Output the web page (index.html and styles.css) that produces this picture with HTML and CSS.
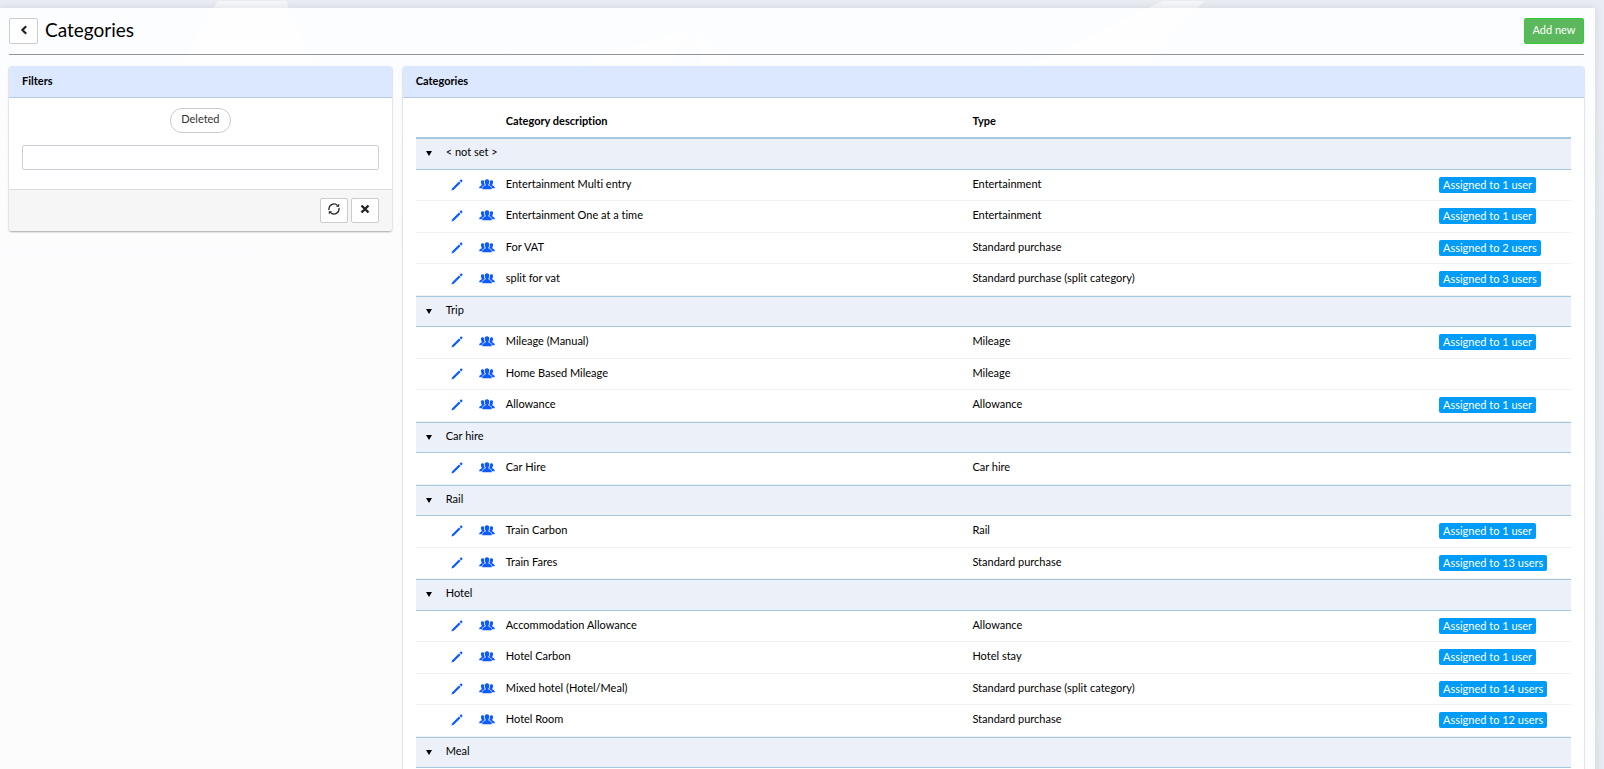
FILE: index.html
```html
<!DOCTYPE html>
<html lang="en">
<head>
    <meta charset="UTF-8">
    <meta name="viewport" content="width=device-width, initial-scale=1.0">
    <title>Categories</title>
    <link rel="stylesheet" href="styles.css">
</head>
<body>
    <svg class="backdrop" width="1604" height="200" aria-hidden="true">
        <polygon points="218,1 286,1 313,64 180,64" />
        <polygon points="1163,1 1204,1 1144,66 1028,66" />
        <polygon points="600,54 690,30 668,66 580,66" />
        <polygon points="693,30 735,66 702,66" />
    </svg>

    <!-- icons shared by the rows -->
    <svg class="sprite" width="0" height="0" aria-hidden="true">
        <symbol id="pencil" viewBox="0 0 12 12">
            <path d="M0.4 11.6 L1.2 9.2 L8 2.4 L9.6 4 L2.8 10.8 Z M8.6 1.8 L9.8 0.6 Q10.2 0.2 10.6 0.6 L11.4 1.4 Q11.8 1.8 11.4 2.2 L10.2 3.4 Z" />
        </symbol>
        <symbol id="users" viewBox="0 0 16 11">
            <path d="M8 0.3 C9.6 0.3 10.4 1.4 10.3 2.9 C10.2 4 9.9 4.7 9.4 5.3 L9.4 6.3 C9.8 7 12.2 7.4 12.6 8.4 L12.8 10.3 L3.2 10.3 L3.4 8.4 C3.8 7.4 6.2 7 6.6 6.3 L6.6 5.3 C6.1 4.7 5.8 4 5.7 2.9 C5.6 1.4 6.4 0.3 8 0.3 Z" />
            <path d="M3.7 1.3 C4.4 1.3 4.9 1.5 5 2 C4.8 3.4 5.1 4.7 5.7 5.6 L5.7 6.3 C4.4 6.9 3.2 7.3 2.8 9.3 L0.2 9.3 C0.2 7.6 0.8 7.1 2.5 6.6 L2.7 5.4 C2.1 4.7 1.9 3.9 1.9 3.1 C1.9 1.9 2.5 1.3 3.7 1.3 Z" />
            <path d="M12.3 1.3 C11.6 1.3 11.1 1.5 11 2 C11.2 3.4 10.9 4.7 10.3 5.6 L10.3 6.3 C11.6 6.9 12.8 7.3 13.2 9.3 L15.8 9.3 C15.8 7.6 15.2 7.1 13.5 6.6 L13.3 5.4 C13.9 4.7 14.1 3.9 14.1 3.1 C14.1 1.9 13.5 1.3 12.3 1.3 Z" />
        </symbol>
        <symbol id="caret" viewBox="0 0 6 5">
            <path d="M0 0 H6 L3 5 Z" />
        </symbol>
    </svg>

    <div class="page">
        <header class="page-header">
            <button class="btn btn-back" type="button" aria-label="Back">
                <svg width="8" height="10" viewBox="0 0 8 10"><path d="M6.2 1.2 L2.4 5 L6.2 8.8" fill="none" stroke="#222" stroke-width="2.2" /></svg>
            </button>
            <h1>Categories</h1>
            <button class="btn btn-add" type="button">Add new</button>
        </header>

        <div class="columns">
            <section class="panel">
                <h2>Filters</h2>
                <div class="filter-body">
                    <button class="pill" type="button">Deleted</button>
                    <input type="text" class="search" aria-label="Filter text">
                </div>
                <div class="filter-footer">
                    <button class="btn" type="button" aria-label="Refresh">
                        <svg width="12" height="12" viewBox="0 0 12 12"><path d="M1.1 7.2 A5 5 0 0 1 9.6 2.6 M10.9 4.8 A5 5 0 0 1 2.4 9.4" fill="none" stroke="#222" stroke-width="1.3" /><path d="M8 3.7 H11.2 V0.7 Z M4 8.3 H0.8 V11.3 Z" fill="#222" /></svg>
                    </button>
                    <button class="btn" type="button" aria-label="Clear">
                        <svg width="10" height="12" viewBox="0 0 10 12"><path d="M1.5 2.5 L8.5 9.5 M8.5 2.5 L1.5 9.5" fill="none" stroke="#222" stroke-width="2.4" /></svg>
                    </button>
                </div>
            </section>

            <section class="panel">
                <h2>Categories</h2>
                <div class="table-body">
                    <table>
                        <colgroup>
                            <col class="col-toggle">
                            <col class="col-icon">
                            <col class="col-icon">
                            <col>
                            <col>
                            <col class="col-assigned">
                        </colgroup>
                        <thead>
                            <tr>
                                <th colspan="3"></th>
                                <th>Category description</th>
                                <th>Type</th>
                                <th></th>
                            </tr>
                        </thead>
                        <tbody id="rows"></tbody>
                    </table>
                </div>
            </section>
        </div>
    </div>

    <script src="script.js"></script>
</body>
</html>
```
FILE: styles.css
```css
* {
    box-sizing: border-box;
}

body {
    font-family: Lato, sans-serif;
    font-size: 11px;
    font-variant-ligatures: none;
    line-height: 1.5;
    color: #000;
    margin: 0;
    height: 100vh;
    overflow: hidden;
    background: linear-gradient(#e9edf3, #e6eaf1);
}

button,
input {
    font: inherit;
}

.backdrop {
    position: absolute;
    top: 0;
    left: 0;
    z-index: -1;
    fill: #f5f7fa;
}

.sprite {
    position: absolute;
}

.page {
    margin: 8px 9px 0 0;
    padding: 10px 11px 10px 9px;
    min-height: 100vh;
    background-color: rgba(255, 255, 255, 0.85);
    box-shadow: 0 0 8px rgba(0, 0, 0, 0.1);
}

.page-header {
    display: flex;
    align-items: flex-start;
    padding-bottom: 10px;
    border-bottom: 1px solid #949494;
}

h1 {
    margin: 0 auto 0 7px;
    font-size: 19px;
    font-weight: 400;
    line-height: 23px;
}

.btn {
    display: flex;
    justify-content: center;
    width: 28px;
    height: 25px;
    padding: 4px 0;
    background-color: #fff;
    border: 1px solid #ccc;
    border-radius: 2px;
    cursor: pointer;
}

.btn-back {
    width: 29px;
    height: 26px;
    padding: 6px 0;
}

.btn-add {
    width: 60px;
    height: 26px;
    padding: 3px 0;
    background-color: #5cb85c;
    border-color: #32cd32;
    color: #fff;
}

.columns {
    display: grid;
    grid-template-columns: calc(25% - 11px) 1fr;
    gap: 11px;
    align-items: start;
    margin-top: 11px;
}

.panel {
    background-color: #fff;
    border-radius: 3px;
    box-shadow: 0 1px 2px rgba(0, 0, 0, 0.35);
    overflow: hidden;
}

.panel h2 {
    margin: 0;
    padding: 7px 13px;
    font-size: 11px;
    font-weight: 700;
    background-color: #dbe8ff;
    border-bottom: 1px solid #b5cbe4;
}

.filter-body {
    display: flex;
    flex-direction: column;
    align-items: center;
    gap: 12px;
    padding: 10px 13px 19px;
}

.pill {
    height: 25px;
    padding: 2px 10px 5px;
    background-color: #fff;
    border: 1px solid #ccc;
    border-radius: 12px;
    color: #333;
    cursor: pointer;
}

.search {
    width: 100%;
    height: 25px;
    padding: 2px 8px;
    border: 1px solid #ccd0d6;
    border-radius: 2px;
}

.filter-footer {
    display: flex;
    justify-content: flex-end;
    gap: 3px;
    padding: 8px 13px;
    background-color: #f6f6f6;
    border-top: 1px solid #ddd;
}

.table-body {
    padding: 10px 13px;
}

table {
    width: 100%;
    table-layout: fixed;
    border-spacing: 0;
}

.col-toggle {
    width: 25px;
}

.col-icon {
    width: 30px;
}

.col-assigned {
    width: 137px;
}

th {
    padding: 5px 5px 8px;
    text-align: left;
    border-bottom: 1px solid #a5c8dc;
}

td {
    padding: 6px 5px 8px;
    vertical-align: top;
    border-bottom: 1px solid #f1f1f1;
}

.group td {
    padding: 5px 5px 8px;
    background-color: #ebf0f9;
    border-top: 1px solid #a5c8dc;
    border-bottom: 1px solid #a5c8dc;
}

td.icon-cell {
    padding: 9px 0 0 2px;
    text-align: center;
}

.group td.icon-cell {
    padding-top: 12px;
}

td.badge-cell {
    padding: 7px 5px 0;
}

.icon-btn {
    display: block;
    width: 100%;
    padding: 0;
    background: none;
    border: none;
    color: #0d5bff;
    cursor: pointer;
}

.icon-btn svg {
    display: block;
    margin: 0 auto;
    fill: currentColor;
}

.icon-btn .caret {
    fill: #000;
}

.badge {
    display: block;
    width: fit-content;
    padding: 0 4px;
    line-height: 16px;
    background-color: #009cf7;
    border-radius: 2px;
    color: #fff;
}
```
FILE: script.js
```js
const groups = [
    ['< not set >', [
        ['Entertainment Multi entry', 'Entertainment', 1],
        ['Entertainment One at a time', 'Entertainment', 1],
        ['For VAT', 'Standard purchase', 2],
        ['split for vat', 'Standard purchase (split category)', 3]
    ]],
    ['Trip', [
        ['Mileage (Manual)', 'Mileage', 1],
        ['Home Based Mileage', 'Mileage', 0],
        ['Allowance', 'Allowance', 1]
    ]],
    ['Car hire', [
        ['Car Hire', 'Car hire', 0]
    ]],
    ['Rail', [
        ['Train Carbon', 'Rail', 1],
        ['Train Fares', 'Standard purchase', 13]
    ]],
    ['Hotel', [
        ['Accommodation Allowance', 'Allowance', 1],
        ['Hotel Carbon', 'Hotel stay', 1],
        ['Mixed hotel (Hotel/Meal)', 'Standard purchase (split category)', 14],
        ['Hotel Room', 'Standard purchase', 12]
    ]],
    ['Meal', []]
];

function iconButton(icon, width, height, label) {
    return `<button class="icon-btn" type="button" aria-label="${label}"><svg class="${icon}" width="${width}" height="${height}"><use href="#${icon}"/></svg></button>`;
}

function badge(count) {
    if (!count) {
        return '';
    }
    return `<span class="badge">Assigned to ${count} user${count > 1 ? 's' : ''}</span>`;
}

let html = '';
groups.forEach(([name, items]) => {
    html += `
        <tr class="group">
            <td class="icon-cell">${iconButton('caret', 6, 5, 'Collapse')}</td>
            <td colspan="5">${name.replace('<', '&lt;').replace('>', '&gt;')}</td>
        </tr>`;
    items.forEach(([description, type, count]) => {
        html += `
        <tr>
            <td></td>
            <td class="icon-cell">${iconButton('pencil', 12, 12, 'Edit')}</td>
            <td class="icon-cell">${iconButton('users', 16, 11, 'Users')}</td>
            <td>${description}</td>
            <td>${type}</td>
            <td class="badge-cell">${badge(count)}</td>
        </tr>`;
    });
});
document.getElementById('rows').innerHTML = html;
```
